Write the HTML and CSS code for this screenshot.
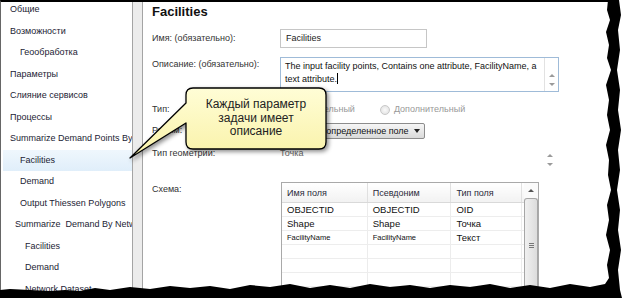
FILE: index.html
```html
<!DOCTYPE html>
<html lang="ru">
<head>
  <meta charset="UTF-8" />
  <meta name="viewport" content="width=device-width, initial-scale=1.0"/>
  <title>Параметры задачи</title>
  <link rel="stylesheet" href="styles.css">
</head>
<body>

<div class="window">
  <aside class="sidebar">
    <ul class="tree">
      <li class="l1">Общие</li>
      <li class="l1">Возможности</li>
      <li class="l2">Геообработка</li>
      <li class="l1">Параметры</li>
      <li class="l1">Слияние сервисов</li>
      <li class="l1">Процессы</li>
      <li class="l1">Summarize Demand Points By</li>
      <li class="l2 selected">Facilities</li>
      <li class="l2">Demand</li>
      <li class="l2">Output Thiessen Polygons</li>
      <li class="l15">Summarize&nbsp; Demand By Network</li>
      <li class="l3">Facilities</li>
      <li class="l3">Demand</li>
      <li class="l3">Network Dataset</li>
    </ul>
  </aside>

  <div class="splitter"></div>

  <main class="details">
    <h1>Facilities</h1>

    <div class="row row-name">
      <label>Имя: (обязательно):</label>
      <div class="text-input">Facilities</div>
    </div>

    <div class="row row-desc">
      <label>Описание: (обязательно):</label>
      <div class="text-area">
        <div class="area-text">The input facility points, Contains one attribute, FacilityName, a text attribute.<span class="caret"></span></div>
        <div class="area-scroll"><span class="arr up"></span><span class="arr down"></span></div>
      </div>
    </div>

    <div class="row row-type">
      <label>Тип:</label>
      <div class="radios">
        <span class="radio"><i></i>Обязательный</span>
        <span class="radio"><i></i>Дополнительный</span>
      </div>
    </div>

    <div class="row row-mode">
      <label>Режим:</label>
      <div class="dropdown"><span class="dd-text">Задается определенное поле</span><span class="dd-arrow"></span></div>
    </div>

    <div class="row row-geom">
      <label>Тип геометрии:</label>
      <div class="value">Точка</div>
      <div class="spinner"><span class="arr up"></span><span class="arr down"></span></div>
    </div>

    <div class="row row-schema">
      <label>Схема:</label>
      <div class="grid">
        <table>
          <thead>
            <tr><th class="c1">Имя поля</th><th class="c2">Псевдоним</th><th class="c3">Тип поля</th><th class="c4"></th></tr>
          </thead>
          <tbody>
            <tr><td>OBJECTID</td><td>OBJECTID</td><td>OID</td><td></td></tr>
            <tr><td>Shape</td><td>Shape</td><td>Точка</td><td></td></tr>
            <tr class="small"><td>FacilityName</td><td>FacilityName</td><td class="norm">Текст</td><td></td></tr>
            <tr><td></td><td></td><td></td><td></td></tr>
            <tr><td></td><td></td><td></td><td></td></tr>
            <tr><td></td><td></td><td></td><td></td></tr>
          </tbody>
        </table>
        <div class="vscroll">
          <span class="arr up"></span>
          <div class="thumb"><span class="grip"></span></div>
        </div>
      </div>
    </div>
  </main>
</div>

<div class="callout">
  <svg width="210" height="84" viewBox="0 0 210 84">
    <defs>
      <linearGradient id="note" x1="0" y1="0" x2="0" y2="1">
        <stop offset="0" stop-color="#fffdd6"/>
        <stop offset="1" stop-color="#f9f2a8"/>
      </linearGradient>
    </defs>
    <path d="M68 6 H194 Q201 6 201 13 V60 Q201 67 194 67 H68 Q61 67 61 60 V41 L5 76 L61 21 V13 Q61 6 68 6 Z"
          fill="url(#note)" stroke="#000" stroke-width="1.3" stroke-linejoin="round"/>
  </svg>
  <div class="callout-text">Каждый параметр<br>задачи имеет<br>описание</div>
</div>

<svg class="torn" width="622" height="298" viewBox="0 0 622 298">
  <polygon fill="#000" points="608,0 607,10 610,20 606,32 609,45 607,58 611,70 606,85 609,100 607,115 610,130 606,145 609,160 608,175 611,190 607,205 609,220 606,235 610,250 607,265 609,278 605,284 590,287 570,284 550,288 530,285 510,288 490,284 470,287 450,285 430,288 410,285 390,287 370,284 350,288 330,285 310,288 290,284 270,287 250,285 230,289 210,286 190,288 170,286 150,289 130,287 110,290 95,288 80,291 65,290 50,291 30,290 10,289 0,290 0,298 622,298 622,0"/>
  <polygon fill="#fff" points="619,0 621,15 618,30 620,50 617,70 620,90 618,110 621,130 618,150 620,170 617,190 620,210 618,230 621,250 618,270 620,290 622,298 622,0"/>
</svg>

</body>
</html>
```

FILE: styles.css
```css
body {
  margin: 0;
  width: 622px;
  height: 298px;
  overflow: hidden;
  position: relative;
  background: #fff;
  font-family: "Liberation Sans", Arial, sans-serif;
  font-size: 9px;
  color: #222;
}

.window {
  display: flex;
  height: 296px;
  border-top: 2px solid #000;
  border-left: 1px solid #666;
}

/* left tree */

.sidebar {
  width: 131px;
  overflow: hidden;
  flex: none;
}

.tree {
  list-style: none;
  margin: -3px 0 0 2px;
  padding: 0;
}

.tree li {
  height: 21.5px;
  line-height: 21.5px;
  white-space: nowrap;
  overflow: hidden;
  color: #1c1c34;
}

.tree .l1 { padding-left: 7px; }
.tree .l2 { padding-left: 17px; }
.tree .l15 { padding-left: 12px; }
.tree .l3 { padding-left: 22px; }

.tree .selected {
  background: linear-gradient(#eff7fd, #e0eefa);
}

.splitter {
  width: 9px;
  flex: none;
  background: #ececec;
  border-left: 1px solid #a4a4a4;
  border-right: 1px solid #a4a4a4;
}

/* right details */

.details {
  flex: 1;
  padding: 1px 0 0 9px;
  color: #333;
}

h1 {
  margin: 0;
  font-size: 13px;
  line-height: 18px;
  font-weight: bold;
  color: #111;
}

.row {
  display: flex;
  align-items: flex-start;
}

.row label {
  width: 128px;
  flex: none;
  line-height: 14px;
}

.row-name { margin-top: 8px; }
.row-name label { padding-top: 2px; }

.text-input {
  width: 140px;
  height: 17px;
  line-height: 17px;
  padding-left: 5px;
  border: 1px solid #c6c6c6;
  color: #222;
}

.row-desc { margin-top: 9px; }

.text-area {
  display: flex;
  width: 277px;
  height: 33px;
  border: 1px solid #9fbbd8;
}

.area-text {
  flex: 1;
  padding: 2px 4px;
  line-height: 13px;
  color: #111;
}

.caret {
  display: inline-block;
  width: 1px;
  height: 11px;
  background: #000;
  vertical-align: -2px;
}

.area-scroll {
  width: 13px;
  border-left: 1px solid #e2e2e2;
  display: flex;
  flex-direction: column;
  align-items: center;
  justify-content: flex-end;
  padding-bottom: 5px;
  gap: 6px;
}

.arr {
  width: 0;
  height: 0;
  border-left: 3px solid transparent;
  border-right: 3px solid transparent;
}

.arr.up { border-bottom: 3px solid #9a9a9a; }
.arr.down { border-top: 3px solid #9a9a9a; }

.row-type {
  margin-top: 10px;
  line-height: 15px;
}

.radios {
  display: flex;
  gap: 25px;
  color: #999;
}

.radio {
  display: flex;
  align-items: center;
  gap: 4px;
}

.radio i {
  width: 8px;
  height: 8px;
  border-radius: 50%;
  border: 1px solid #c8c8c8;
  background: radial-gradient(#fafafa, #dedede);
}

.row-mode { margin-top: 6px; }

.dropdown {
  display: flex;
  align-items: center;
  width: 143px;
  height: 14px;
  border: 1px solid #8c8c8c;
  border-radius: 2px;
  background: linear-gradient(#f6f6f6, #dadada);
  overflow: hidden;
}

.dd-text {
  flex: 1;
  padding-left: 4px;
  white-space: nowrap;
  overflow: hidden;
  color: #111;
}

.dd-arrow {
  margin: 0 4px 0 3px;
  border-left: 3.5px solid transparent;
  border-right: 3.5px solid transparent;
  border-top: 4px solid #222;
}

.row-geom {
  margin-top: 7px;
  line-height: 15px;
}

.value {
  width: 263px;
  color: #666;
}

.spinner {
  width: 14px;
  height: 24px;
  margin-top: 2px;
  display: flex;
  flex-direction: column;
  align-items: center;
  justify-content: center;
  gap: 6px;
}

.row-schema { margin-top: 10px; }

.grid {
  display: flex;
  width: 256px;
  height: 120px;
  border: 1px solid #a9a9a9;
  margin-left: 1px;
}

table {
  border-collapse: collapse;
  width: 242px;
  table-layout: fixed;
  align-self: flex-start;
}

th {
  height: 19px;
  padding: 0 0 0 5px;
  text-align: left;
  font-weight: normal;
  color: #2b2b3b;
  background: linear-gradient(#fff, #f2f2f2);
  border-right: 1px solid #e0e0e0;
  border-bottom: 1px solid #d9d9d9;
}

th.c1 { width: 79px; }
th.c2 { width: 77px; }
th.c3 { width: 64px; }
th.c4 { width: 2px; padding: 0; border-right: none; }

td {
  height: 13px;
  padding: 0 0 0 5px;
  line-height: 13px;
  font-size: 9.5px;
  color: #111;
  border-right: 1px solid #ececec;
  border-bottom: 1px solid #ededed;
  white-space: nowrap;
  overflow: hidden;
}

td:last-child {
  border-right: none;
  padding: 0;
}

tr.small td { font-size: 7.5px; }
tr.small td.norm { font-size: 9.5px; }

.vscroll {
  flex: 1;
  display: flex;
  flex-direction: column;
  align-items: center;
  padding-top: 6px;
  gap: 6px;
  background: #fafafa;
}

.vscroll .arr.up { border-bottom-color: #555; }

.thumb {
  width: 12px;
  flex: 1;
  border: 1px solid #a6a6a6;
  border-bottom: none;
  border-radius: 3px 3px 0 0;
  background: linear-gradient(90deg, #f0f0f0, #dcdcdc);
  display: flex;
  justify-content: center;
  padding-top: 44px;
}

.grip {
  width: 5px;
  height: 5px;
  background: repeating-linear-gradient(#777 0 1px, transparent 1px 2px);
}

/* callout note over the form */

.callout {
  position: absolute;
  left: 125px;
  top: 82px;
  width: 210px;
  height: 84px;
}

.callout svg {
  display: block;
  filter: drop-shadow(2px 2px 2px rgba(0, 0, 0, 0.45));
}

.callout-text {
  position: absolute;
  left: 61px;
  top: 16px;
  width: 140px;
  text-align: center;
  font-size: 12px;
  line-height: 13.5px;
  color: #222;
}

.torn {
  position: absolute;
  left: 0;
  top: 0;
}
```
